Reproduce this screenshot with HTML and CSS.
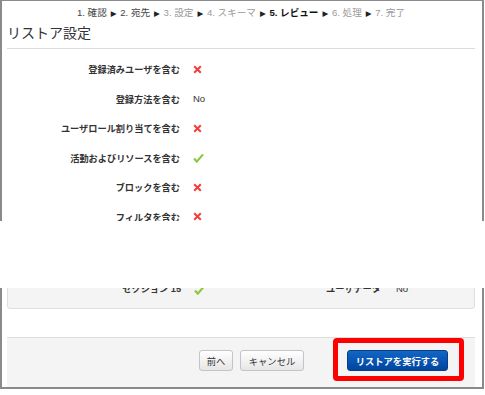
FILE: index.html
```html
<!DOCTYPE html>
<html lang="ja">
<head>
    <meta charset="UTF-8">
    <title>リストア設定</title>
    <link rel="stylesheet" href="styles.css">
</head>
<body>
    <div class="frame frame-top">
        <div class="crumbs">
            <span class="stage done">1. 確認</span><span class="sep">▶</span>
            <span class="stage done">2. 宛先</span><span class="sep">▶</span>
            <span class="stage">3. 設定</span><span class="sep">▶</span>
            <span class="stage">4. スキーマ</span><span class="sep">▶</span>
            <span class="stage current">5. レビュー</span><span class="sep">▶</span>
            <span class="stage">6. 処理</span><span class="sep">▶</span>
            <span class="stage">7. 完了</span>
        </div>
        <h2 class="title">リストア設定</h2>

        <div class="settings">
            <div class="row">
                <span class="label">登録済みユーザを含む</span>
                <span class="value"><svg class="icon-no" width="9" height="9" viewBox="0 0 9 9"><path d="M1.2 1.2 L7.8 7.8 M7.8 1.2 L1.2 7.8"/></svg></span>
            </div>
            <div class="row">
                <span class="label">登録方法を含む</span>
                <span class="value">No</span>
            </div>
            <div class="row">
                <span class="label">ユーザロール割り当てを含む</span>
                <span class="value"><svg class="icon-no" width="9" height="9" viewBox="0 0 9 9"><path d="M1.2 1.2 L7.8 7.8 M7.8 1.2 L1.2 7.8"/></svg></span>
            </div>
            <div class="row">
                <span class="label">活動およびリソースを含む</span>
                <span class="value"><svg class="icon-yes" width="11" height="10" viewBox="0 0 11 10"><polyline points="1,5.5 3.8,8.6 10,1.4"/></svg></span>
            </div>
            <div class="row">
                <span class="label">ブロックを含む</span>
                <span class="value"><svg class="icon-no" width="9" height="9" viewBox="0 0 9 9"><path d="M1.2 1.2 L7.8 7.8 M7.8 1.2 L1.2 7.8"/></svg></span>
            </div>
            <div class="row">
                <span class="label">フィルタを含む</span>
                <span class="value"><svg class="icon-no" width="9" height="9" viewBox="0 0 9 9"><path d="M1.2 1.2 L7.8 7.8 M7.8 1.2 L1.2 7.8"/></svg></span>
            </div>
        </div>
    </div>

    <div class="tear"></div>

    <div class="frame frame-bottom">
        <div class="panel">
            <div class="prow">
                <span class="plabel">セクション 15</span>
                <span class="pvalue pvalue-1"><svg class="icon-yes" width="11" height="10" viewBox="0 0 11 10"><polyline points="1,5.5 3.8,8.6 10,1.4"/></svg></span>
                <span class="plabel plabel-2">ユーザデータ</span>
                <span class="pvalue pvalue-2">No</span>
            </div>
        </div>

        <div class="footer">
            <button class="btn btn-back">前へ</button>
            <button class="btn btn-cancel">キャンセル</button>
            <span class="highlight">
                <button class="btn-primary">リストアを実行する</button>
            </span>
        </div>
    </div>
</body>
</html>
```

FILE: styles.css
```css
body {
    margin: 0;
    background: #fff;
    color: #333;
    font-family: "Liberation Sans", "Noto Sans CJK JP", sans-serif;
}

.frame {
    width: 484px;
    box-sizing: border-box;
    border-left: 2px solid #8a8a8a;
    border-right: 2px solid #8a8a8a;
    padding: 0 7px 0 5px;
    background: #fff;
    overflow: hidden;
}

.frame-top {
    height: 221px;
    border-top: 1px solid #8a8a8a;
}

.frame-bottom {
    border-bottom: 2px solid #8a8a8a;
}

.tear {
    height: 67px;
}

/* Stage breadcrumb */
.crumbs {
    padding-top: 5px;
    text-align: center;
    font-size: 9.6px;
    line-height: 14px;
    white-space: nowrap;
}

.stage {
    color: #9a9a9a;
}

.stage.done {
    color: #444;
}

.stage.current {
    color: #111;
    font-weight: bold;
}

.sep {
    font-family: "DejaVu Sans", sans-serif;
    font-size: 7.5px;
    color: #222;
    margin: 0 1px 0 4px;
}

.title {
    margin: 3px 0 0;
    padding-bottom: 6px;
    border-bottom: 1px solid #dcdcdc;
    font-size: 14px;
    line-height: 18px;
    font-weight: normal;
    color: #333;
}

/* Review rows */
.settings {
    padding-top: 5.5px;
}

.row {
    display: flex;
    align-items: center;
    height: 29.5px;
}

.label,
.plabel {
    width: 173px;
    flex-shrink: 0;
    text-align: right;
    font-size: 9.2px;
    font-weight: bold;
    color: #333;
}

.value,
.pvalue {
    margin-left: 13px;
    font-size: 9.5px;
    color: #333;
    display: flex;
    align-items: center;
}

.icon-no path {
    stroke: #f53b3b;
    stroke-width: 2;
    fill: none;
}

.icon-yes polyline {
    stroke: #8dc63f;
    stroke-width: 2.2;
    fill: none;
}

/* Section panel */
.panel {
    margin-top: -8px;
    padding-bottom: 13px;
    background: #f4f4f4;
    border: 1px solid #dedede;
    border-radius: 3px;
}

.prow {
    display: flex;
    align-items: center;
    height: 14px;
}

.plabel {
    width: 173px;
}

.pvalue {
    width: 60px;
}

.pvalue-1 svg {
    margin-top: 4px;
}

.plabel-2 {
    width: 127px;
    margin-left: 0;
}

.pvalue-2 {
    margin-left: 15px;
}

/* Footer buttons */
.footer {
    display: flex;
    justify-content: flex-end;
    align-items: flex-start;
    margin-top: 28px;
    padding: 0 11px 6px 0;
    background: #f4f4f4;
    border-top: 1px solid #dedede;
}

.btn {
    height: 21px;
    margin-top: 12px;
    margin-left: 7px;
    padding: 0;
    border: 1px solid #c4c4c4;
    border-radius: 3px;
    background: linear-gradient(#ffffff, #e6e6e6);
    color: #333;
    font-family: inherit;
    font-size: 9.3px;
    text-align: center;
}

.btn-back {
    width: 34px;
}

.btn-cancel {
    width: 64px;
}

.highlight {
    display: flex;
    margin-left: 29px;
    padding: 7px 11px 5px 9px;
    border: 5px solid #ff0000;
    border-radius: 4px;
}

.btn-primary {
    width: 101px;
    height: 21px;
    padding: 0;
    border: 1px solid #0a3d85;
    border-radius: 3px;
    background: linear-gradient(#1266c4, #0045a0);
    color: #fff;
    font-family: inherit;
    font-size: 9.3px;
    font-weight: bold;
}
```
